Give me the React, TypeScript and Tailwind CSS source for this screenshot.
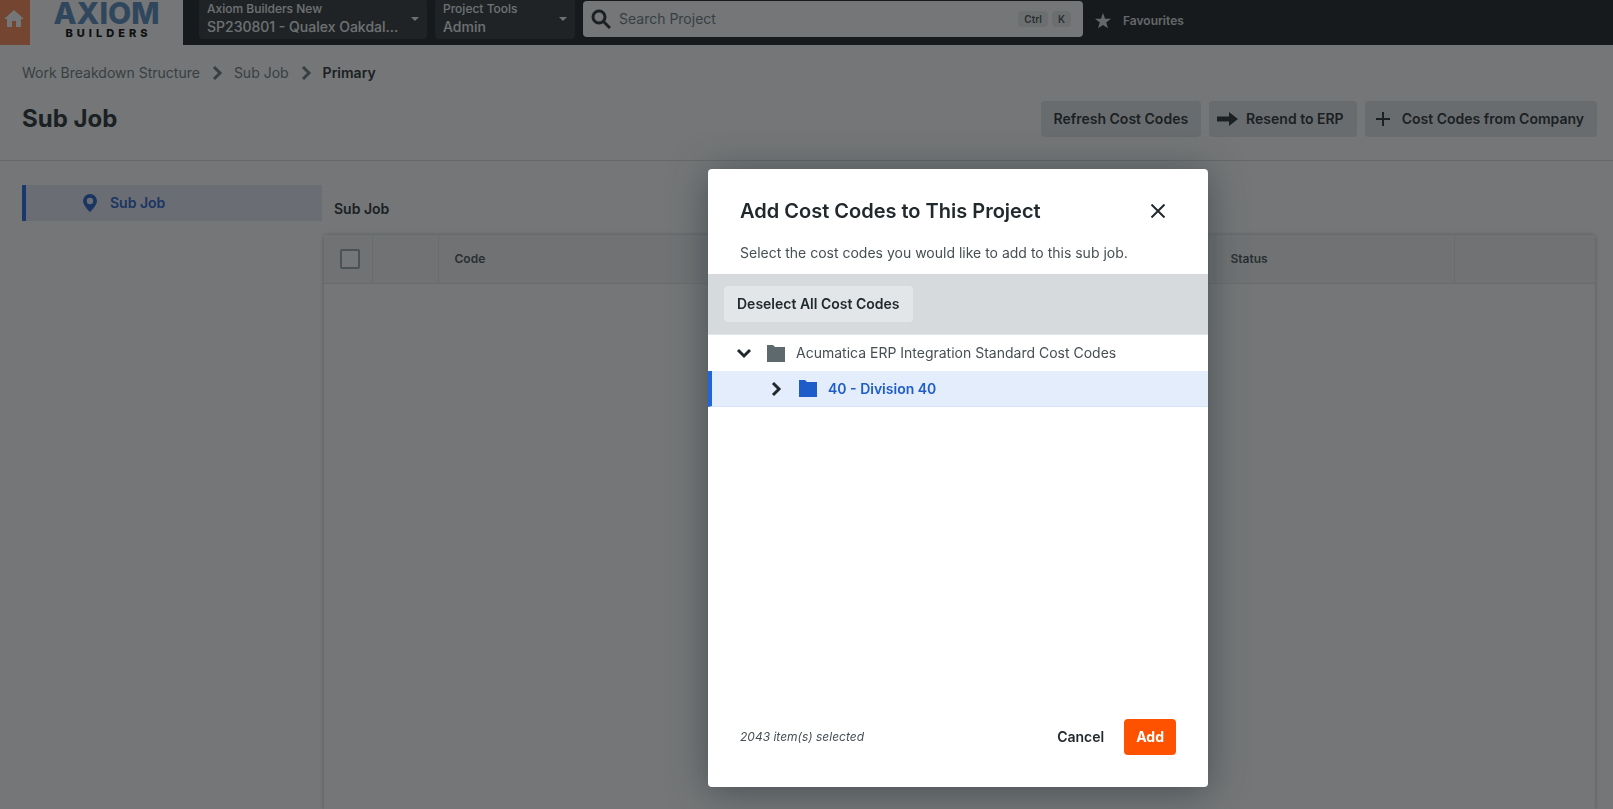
import type { ReactNode } from 'react';

const CaretDown = () => (
  <svg viewBox="0 0 8 4" className="h-1 w-2 shrink-0 fill-current" aria-hidden="true">
    <path d="M0 0h8L4 4z" />
  </svg>
);

const Chevron = ({ className = '' }: { className?: string }) => (
  <svg viewBox="0 0 24 24" className={`h-6 w-6 shrink-0 fill-none stroke-current ${className}`} strokeWidth="3" aria-hidden="true">
    <path d="M9 6l6 6-6 6" />
  </svg>
);

const Folder = ({ className = '' }: { className?: string }) => (
  <svg viewBox="0 0 18 17" className={`h-[17px] w-[18px] shrink-0 fill-current ${className}`} aria-hidden="true">
    <path d="M0 0h6l2 2h10v15H0z" />
  </svg>
);

const NavPicker = ({ label, value, className }: { label: string; value: string; className: string }) => (
  <button type="button" className={`flex h-10 items-center gap-2 rounded bg-[#2b3033] px-2 text-left text-[#f0f2f3] ${className}`}>
    <span className="min-w-0 flex-1">
      <span className="block truncate text-[12px] leading-4 font-medium">{label}</span>
      <span className="block truncate text-sm leading-5 font-medium">{value}</span>
    </span>
    <CaretDown />
  </button>
);

const NavBar = () => (
  <header className="flex h-[45px] items-start overflow-hidden bg-[#15191c]">
    <button type="button" aria-label="Home" className="flex h-full w-[30px] items-center justify-center bg-[#ff8652] pr-[2px] pb-2 text-white">
      <svg viewBox="0 0 20 17" className="h-[17px] w-5 fill-current" aria-hidden="true">
        <path d="M10 0L0 9h3v8h5v-6h4v6h5V9h3z" />
      </svg>
    </button>
    <div className="flex h-full w-[153px] flex-col items-center bg-white">
      <span className="-mt-[2px] text-[30px] leading-[30px] font-extrabold text-[#5688bf]">AXIOM</span>
      <span className="pl-1 text-[11px] leading-[11px] font-extrabold tracking-[4px] text-black">BUILDERS</span>
    </div>
    <div className="-mt-px ml-4 flex gap-2">
      <NavPicker label="Axiom Builders New" value="SP230801 - Qualex Oakdal..." className="w-[228px]" />
      <NavPicker label="Project Tools" value="Admin" className="w-[140px]" />
    </div>
    <label className="mt-px ml-2 flex h-9 w-[500px] items-center rounded bg-white px-2">
      <svg viewBox="0 0 20 20" className="h-5 w-5 fill-none stroke-[#22292d]" strokeWidth="3" aria-hidden="true">
        <circle cx="8" cy="8" r="6" />
        <path d="M12 12l7 7" />
      </svg>
      <input type="text" aria-label="Search Project" placeholder="Search Project" className="ml-2 min-w-0 flex-1 text-sm outline-none placeholder:text-[#6a767c]" />
      <kbd className="rounded-sm bg-[#eaedee] px-[6px] font-['Inter',sans-serif] text-[10px] leading-4 font-semibold text-[#464f53]">Ctrl</kbd>
      <kbd className="mr-1 ml-1 rounded-sm bg-[#eaedee] px-[6px] font-['Inter',sans-serif] text-[10px] leading-4 font-semibold text-[#464f53]">K</kbd>
    </label>
    <button type="button" className="mt-[11px] ml-3 flex items-center gap-3 text-[12px] leading-5 font-semibold text-[#d9dcde]">
      <svg viewBox="0 0 24 24" className="h-4 w-4 fill-current" aria-hidden="true">
        <path d="M12 0l3 8.500 9 .2-7.200 5.500L19.500 23 12 17.900 4.500 23l2.700-8.800L0 8.700l9-.2z" />
      </svg>
      Favourites
    </button>
  </header>
);

const ActionButton = ({ icon, children }: { icon?: ReactNode; children: ReactNode }) => (
  <button type="button" className="flex h-9 items-center rounded bg-[#e3e6e8] px-[13px] text-sm font-semibold">
    {icon}
    {children}
  </button>
);

const PageHeader = () => (
  <div className="border-b border-[#d6dadc] px-4 pb-[23px] pl-[22px]">
    <nav aria-label="Breadcrumb" className="flex items-center gap-[5px] pt-4 text-sm leading-6 text-[#6a767c]">
      <a href="#wbs">Work Breakdown Structure</a>
      <Chevron />
      <a href="#sub-job">Sub Job</a>
      <Chevron />
      <span className="font-semibold text-[#22292d]">Primary</span>
    </nav>
    <div className="mt-4 flex items-center justify-between">
      <h1 className="text-2xl font-bold">Sub Job</h1>
      <div className="flex gap-2">
        <ActionButton>Refresh Cost Codes</ActionButton>
        <ActionButton
          icon={
            <svg viewBox="0 0 21 14" className="mr-2 -ml-[5px] h-[14px] w-[21px] fill-current" aria-hidden="true">
              <path d="M0 4.500h12V0l9 7-9 7V9.500H0z" />
            </svg>
          }
        >
          Resend to ERP
        </ActionButton>
        <ActionButton
          icon={
            <svg viewBox="0 0 14 14" className="mr-3 -ml-[2px] h-[14px] w-[14px] fill-none stroke-current" strokeWidth="2" aria-hidden="true">
              <path d="M7 0v14M0 7h14" />
            </svg>
          }
        >
          Cost Codes from Company
        </ActionButton>
      </div>
    </div>
  </div>
);

const SubJobTable = () => (
  <div className="flex min-w-0 flex-1 flex-col">
    <h2 className="mt-3 ml-3 text-sm leading-6 font-semibold">Sub Job</h2>
    <div className="mx-[2px] mt-[14px] flex-1 rounded-t bg-white shadow-[0_0_4px_rgba(60,70,75,0.4)]">
      <table className="w-full table-fixed text-left text-[12px] text-[#464f53]">
        <thead className="bg-[#f4f5f6]">
          <tr className="h-12 border-b border-[#e3e6e8]">
            <th className="w-12 border-r border-[#e3e6e8] pl-4">
              <input type="checkbox" aria-label="Select all" className="block h-5 w-5 appearance-none rounded-[2px] border-2 border-[#98a5ab] bg-white" />
            </th>
            <th className="w-[66px] border-r border-[#e3e6e8]" />
            <th className="border-r border-[#e3e6e8] pl-4 font-semibold">Code</th>
            <th className="w-[240px] border-r border-[#e3e6e8] pl-4 font-semibold">Status</th>
            <th className="w-[141px]" />
          </tr>
        </thead>
      </table>
    </div>
  </div>
);

const AddCostCodesDialog = () => (
  <div className="fixed inset-0 flex items-start justify-center bg-[#181a1c]/60 pt-[169px] pl-[303px]">
    <section
      role="dialog"
      aria-modal="true"
      aria-labelledby="dialog-title"
      className="flex w-[500px] max-w-full flex-col rounded bg-white shadow-[0_4px_36px_rgba(60,70,75,0.8)]"
    >
      <div className="flex items-center justify-between px-8 pt-6">
        <h2 id="dialog-title" className="text-xl leading-8 font-semibold">Add Cost Codes to This Project</h2>
        <button type="button" aria-label="Close" className="flex h-9 w-9 items-center justify-center">
          <svg viewBox="0 0 14 14" className="h-[14px] w-[14px] fill-none stroke-current" strokeWidth="2" aria-hidden="true">
            <path d="M0.500 0.500l13 13M13.500 0.500l-13 13" />
          </svg>
        </button>
      </div>
      <p className="mt-3 px-8 pb-[9px] text-sm leading-6 text-[#464f53]">Select the cost codes you would like to add to this sub job.</p>
      <div className="border-b border-[#e3e6e8] bg-[#d6dadc] px-4 py-3">
        <button type="button" className="h-9 rounded bg-[#e3e6e8] px-[13px] text-sm font-semibold">Deselect All Cost Codes</button>
      </div>
      <ul className="min-h-[348px] text-sm">
        <li>
          <button type="button" aria-expanded="true" className="flex h-9 w-full items-center pl-6 text-[#464f53]">
            <Chevron className="rotate-90 text-[#22292d]" />
            <Folder className="ml-[11px] text-[#5e696e]" />
            <span className="ml-[11px]">Acumatica ERP Integration Standard Cost Codes</span>
          </button>
          <ul>
            <li>
              <button type="button" aria-expanded="false" className="flex h-9 w-full items-center border-b border-l-4 border-b-[#d5e2f8] border-l-[#2066df] bg-[#e4edfb] pl-[52px] font-semibold text-[#1d5cc9]">
                <Chevron className="text-[#22292d]" />
                <Folder className="ml-[11px]" />
                <span className="ml-[11px]">40 - Division 40</span>
              </button>
            </li>
          </ul>
        </li>
      </ul>
      <div className="flex items-center px-8 pt-9 pb-8">
        <span className="flex-1 text-[12px] text-[#464f53] italic">2043 item(s) selected</span>
        <button type="button" className="h-9 px-3 text-sm font-semibold">Cancel</button>
        <button type="button" className="ml-2 h-9 rounded bg-[#ff5200] px-3 text-sm font-bold text-white">Add</button>
      </div>
    </section>
  </div>
);

export default function App() {
  return (
    <div className="flex min-h-screen flex-col overflow-hidden bg-white font-['Inter',sans-serif] text-[#22292d]">
      <NavBar />
      <PageHeader />
      <main className="flex flex-1 pt-6 pr-4 pl-[22px]">
        <aside className="w-[300px] shrink-0">
          <a href="#sub-job" className="flex h-9 items-center border-l-4 border-[#2066df] bg-[#e5e9f6] pl-[57px] text-sm font-semibold text-[#1d5cc9]">
            <svg viewBox="0 0 14 18" className="mr-[13px] h-[18px] w-[14px] fill-current" aria-hidden="true">
              <path fillRule="evenodd" d="M7 0a7 7 0 0 0-7 7c0 4.500 7 11 7 11s7-6.500 7-11a7 7 0 0 0-7-7zm0 3.800a3.200 3.200 0 1 1 0 6.400 3.200 3.200 0 0 1 0-6.400z" />
            </svg>
            Sub Job
          </a>
        </aside>
        <SubJobTable />
      </main>
      <AddCostCodesDialog />
    </div>
  );
}
